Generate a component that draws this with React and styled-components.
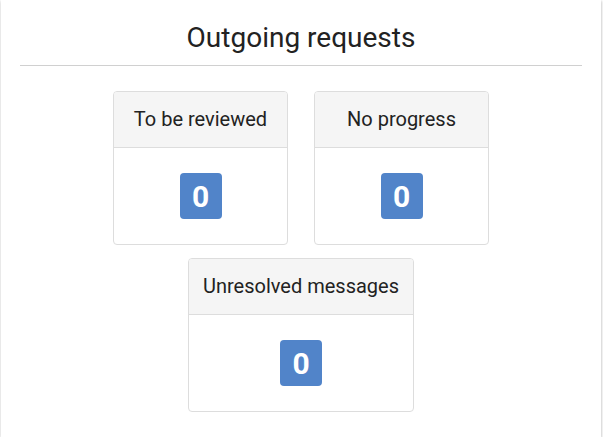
import React from "react";
import styled, { createGlobalStyle } from "styled-components";

const Global = createGlobalStyle`
  html, body { margin: 0; padding: 0; background: #fff; }
  body { font-family: Roboto, "Noto Sans", Arial, sans-serif; color: #222; }
`;

const Panel = styled.div`
  width: 600px;
  height: 437px;
  margin-left: 1px;
  box-sizing: border-box;
  background: #fff;
  box-shadow: 0 1px 3px rgba(0,0,0,0.22), 1px 1px 2px rgba(0,0,0,0.08);
  padding: 20px 19px 0 19px;
`;

const Title = styled.h2`
  margin: 0;
  font-size: 28px;
  font-weight: 400;
  text-align: center;
  line-height: 36px;
  color: #222;
  padding-bottom: 9px;
  border-bottom: 1px solid #d0d0d0;
`;

const Grid = styled.div`
  display: flex;
  flex-wrap: wrap;
  justify-content: center;
  gap: 13px 26px;
  max-width: 440px;
  margin: 25px auto 0;
`;

const Box = styled.div`
  min-width: 175px;
  box-sizing: border-box;
  border: 1px solid #ddd;
  border-radius: 4px;
  overflow: hidden;
  background: #fff;
`;

const BoxHead = styled.div`
  height: 56px;
  padding: 0 14px 1px;
  box-sizing: border-box;
  display: flex;
  align-items: center;
  justify-content: center;
  background: #f5f5f5;
  border-bottom: 1px solid #ddd;
  font-size: 20px;
  color: #222;
  white-space: nowrap;
`;

const BoxBody = styled.div`
  height: 96px;
  display: flex;
  align-items: center;
  justify-content: center;
`;

const Badge = styled.span`
  display: inline-flex;
  align-items: center;
  justify-content: center;
  width: 42px;
  height: 46px;
  border-radius: 4px;
  background: #5184c9;
  color: #fff;
  font-weight: 700;
  font-size: 30px;
`;

const items = [
  { label: "To be reviewed", count: 0 },
  { label: "No progress", count: 0 },
  { label: "Unresolved messages", count: 0 },
];

export default function App() {
  return (
    <>
      <Global />
      <Panel>
        <Title>Outgoing requests</Title>
        <Grid>
          {items.map((it) => (
            <Box key={it.label}>
              <BoxHead>{it.label}</BoxHead>
              <BoxBody>
                <Badge>{it.count}</Badge>
              </BoxBody>
            </Box>
          ))}
        </Grid>
      </Panel>
    </>
  );
}
